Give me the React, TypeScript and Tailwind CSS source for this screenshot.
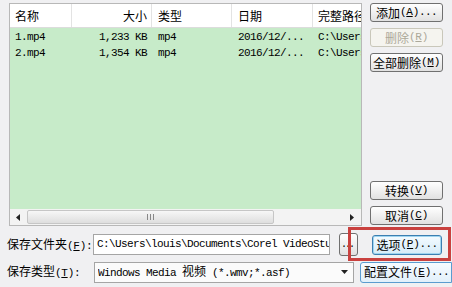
const mono = "font-['Liberation_Mono','Noto_Sans_CJK_SC',monospace] text-[11px] tracking-[-0.6px]";

function Z({ children }: { children: React.ReactNode }) {
  return <span className="font-['Noto_Sans_CJK_SC',sans-serif] text-[12px] tracking-normal">{children}</span>;
}

function Key({ k }: { k: string }) {
  return (
    <span className="tracking-[-0.3px]">
      (<u>{k}</u>)
    </span>
  );
}

function Btn({
  children,
  disabled,
  focused,
  className = "",
}: {
  children: React.ReactNode;
  disabled?: boolean;
  focused?: boolean;
  className?: string;
}) {
  return (
    <div
      className={`flex items-center justify-center h-[19px] rounded-[3px] border leading-none whitespace-nowrap ${
        focused
          ? "border-[#3c7fb1] bg-gradient-to-b from-[#f4fbff] to-[#d6ecf8] shadow-[inset_0_0_0_1px_#9fd5f0]"
          : disabled
          ? "border-[#c9c7ba] bg-[#f5f4ef] text-[#aca899]"
          : "border-[#707070] bg-gradient-to-b from-[#ffffff] to-[#e1e1e1]"
      } ${className}`}
    >
      {children}
    </div>
  );
}

const rows = [
  { name: "1.mp4", size: "1,233 KB" },
  { name: "2.mp4", size: "1,354 KB" },
];

function ListBox() {
  return (
    <div className="w-[353px] h-[223px] border border-[#b8b8b8] bg-white flex flex-col">
      <div className="flex h-[24px] items-center border-b border-[#dcdcdc] bg-white shrink-0">
        <div className="w-[62px] pl-[5px] border-r border-[#e3e3e3] h-full flex items-center"><Z>名称</Z></div>
        <div className="w-[80px] pr-[4px] border-r border-[#e3e3e3] h-full flex items-center justify-end"><Z>大小</Z></div>
        <div className="w-[80px] pl-[6px] border-r border-[#e3e3e3] h-full flex items-center"><Z>类型</Z></div>
        <div className="w-[81px] pl-[6px] border-r border-[#e3e3e3] h-full flex items-center"><Z>日期</Z></div>
        <div className="flex-1 pl-[5px] h-full flex items-center overflow-hidden whitespace-nowrap"><Z>完整路径</Z></div>
      </div>
      <div className="flex-1 bg-[#c7ebc9] pt-[1px]">
        {rows.map((r) => (
          <div key={r.name} className="flex h-[16px] items-center whitespace-nowrap">
            <div className="w-[62px] pl-[5px]">{r.name}</div>
            <div className="w-[80px] pr-[5px] text-right">{r.size}</div>
            <div className="w-[80px] pl-[6px]">mp4</div>
            <div className="w-[81px] pl-[6px]">2016/12/...</div>
            <div className="flex-1 pl-[5px] overflow-hidden">C:\Users\louis\Videos</div>
          </div>
        ))}
      </div>
      <div className="flex h-[16px] bg-[#f3f3f3] shrink-0 items-center">
        <div className="w-[16px] h-full flex items-center justify-center">
          <svg width="4" height="7" viewBox="0 0 4 7"><path d="M4 0 L0 3.5 L4 7 Z" fill="#222" /></svg>
        </div>
        <div className="w-[247px] h-[14px] ml-[1px] rounded-[2px] border border-[#c6c6c6] bg-gradient-to-b from-[#f7f7f7] to-[#dedede] flex items-center justify-center">
          <svg width="7" height="6" viewBox="0 0 7 6"><path d="M0.5 0 V6 M3.5 0 V6 M6.5 0 V6" stroke="#888" strokeWidth="1" /></svg>
        </div>
        <div className="flex-1" />
        <div className="w-[18px] h-full flex items-center justify-center">
          <svg width="4" height="7" viewBox="0 0 4 7"><path d="M0 0 L4 3.5 L0 7 Z" fill="#222" /></svg>
        </div>
      </div>
    </div>
  );
}

export default function App() {
  return (
    <div className={`w-[452px] h-[287px] bg-[#f0f0f2] overflow-hidden relative text-black ${mono}`}>
      <div className="flex pt-[3px] pl-[9px] gap-[8px]">
        <ListBox />
        <div className="flex flex-col w-[73px] h-[223px] gap-[6px]">
          <Btn><Z>添加</Z><Key k="A" />...</Btn>
          <Btn disabled><Z>删除</Z><Key k="R" /></Btn>
          <Btn><Z>全部删除</Z><Key k="M" /></Btn>
          <div className="flex-1" />
          <Btn><Z>转换</Z><Key k="V" /></Btn>
          <Btn className="mb-[1px]"><Z>取消</Z><Key k="C" /></Btn>
        </div>
      </div>

      <div className="flex items-center h-[23px] mt-[7px] pl-[7px]">
        <div className="w-[86px] whitespace-nowrap"><Z>保存文件夹</Z><Key k="F" />:</div>
        <div className="w-[237px] h-[21px] border border-[#a5a5a5] bg-white flex items-center pl-[3px] overflow-hidden whitespace-nowrap">
          C:\Users\louis\Documents\Corel VideoStudio Pro
        </div>
        <div className="ml-[9px] w-[19px] h-[23px] rounded-[3px] border border-[#707070] bg-gradient-to-b from-[#ffffff] to-[#e1e1e1] flex items-end justify-start pl-[1px] pb-[5px] leading-none text-[10px] tracking-[-2px]">
          ...
        </div>
        <Btn focused className="ml-[14px] w-[70px] h-[20px]"><Z>选项</Z><Key k="P" />...</Btn>
      </div>

      <div className="flex items-center h-[22px] mt-[5px] pl-[7px]">
        <div className="w-[88px] whitespace-nowrap"><Z>保存类型</Z><Key k="T" />:</div>
        <div className="w-[263px] h-[21px] border border-[#a5a5a5] bg-[#fbfbfb] flex items-center pl-[3px] whitespace-nowrap">
          <span className="flex-1 overflow-hidden">Windows Media <Z>视频</Z> (*.wmv;*.asf)</span>
          <svg className="mr-[5px]" width="7" height="4" viewBox="0 0 7 4"><path d="M0 0 H7 L3.5 4 Z" fill="#222" /></svg>
        </div>
        <div className="ml-[6px] w-[92px] h-[21px] shrink-0 border border-[#5a9ccf] rounded-l-[3px] bg-gradient-to-b from-[#f6fbff] to-[#e2f0fa] flex items-center pl-[3px] whitespace-nowrap leading-none">
          <Z>配置文件</Z><Key k="E" />...
        </div>
      </div>

      <div className="absolute left-[348px] top-[227px] w-[103px] h-[34px] border-[3px] border-[#c9413f]" />
    </div>
  );
}
